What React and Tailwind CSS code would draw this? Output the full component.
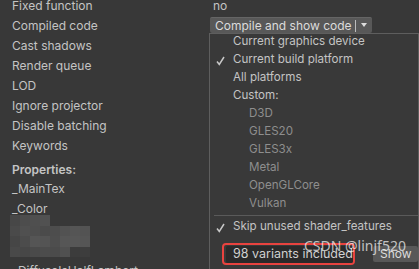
import React from "react";

const labels = [
  "Fixed function",
  "Compiled code",
  "Cast shadows",
  "Render queue",
  "LOD",
  "Ignore projector",
  "Disable batching",
  "Keywords",
];

const pix = [
  ["#474747", "#4d4d4d", "#4f4f4f", "#515151", "#383838", "#383838", "#383838", "#383838"],
  ["#4a4a4a", "#505050", "#4e4e4e", "#4b4b4b", "#4d4d4d", "#525252", "#555555", "#535353"],
  ["#464646", "#4c4c4c", "#555555", "#545454", "#4e4e4e", "#565656", "#575757", "#555555"],
  ["#494949", "#474747", "#4a4a4a", "#4c4c4c", "#4b4b4b", "#505050", "#3c3c3c", "#3d3d3d"],
];

function Check() {
  return (
    <svg width="9" height="10" viewBox="0 0 9 10" className="block">
      <path d="M1 5.5 L3.3 8.5 L8 1" fill="none" stroke="#c8c8c8" strokeWidth="1.5" />
    </svg>
  );
}

function Item({ children, checked, indent, dim }) {
  return (
    <div className="relative h-[18px] flex items-center whitespace-nowrap">
      {checked && (
        <span className="absolute left-[6px] top-[5px]">
          <Check />
        </span>
      )}
      <span
        className={
          (indent ? "pl-[39px] " : "pl-[23px] ") +
          (dim ? "text-[#8e8e8e]" : "text-[#c4c4c4]")
        }
      >
        {children}
      </span>
    </div>
  );
}

export default function App() {
  return (
    <div
      className="relative w-[419px] h-[269px] overflow-hidden bg-[#383838] text-[12px] text-[#c4c4c4] whitespace-nowrap"
      style={{ fontFamily: "Inter, 'Noto Sans', sans-serif" }}
    >
      <div className="flex -mt-[4px]">
        {/* left labels */}
        <div className="w-[210px] pl-[12px] flex flex-col">
          {labels.map((l) => (
            <div key={l} className="h-[20px] flex items-center">
              {l}
            </div>
          ))}
          <div className="h-[4px]" />
          <div className="h-[20px] flex items-center font-semibold">Properties:</div>
          <div className="h-[18px] flex items-center">_MainTex</div>
          <div className="h-[20px] flex items-center pt-[2px]">_Color</div>
          <div className="relative h-[43px]">
            <span className="absolute left-[60px] top-[26px] text-[#9a9a9a]">ha</span>
            <div className="absolute left-[-2px] top-[-3px] flex flex-col">
              {pix.map((row, i) => (
                <div key={i} className="flex">
                  {row.map((c, j) => (
                    <div key={j} className="w-[10px] h-[10.5px]" style={{ background: c }} />
                  ))}
                </div>
              ))}
            </div>
          </div>
          <div className="h-[20px] flex items-center">_DiffuseIsHalfLambert</div>
        </div>

        {/* right values */}
        <div className="flex flex-col">
          <div className="h-[20px] flex items-center pl-[3px]">no</div>
          <div className="mt-[1px] h-[16px] w-[162px] flex items-center rounded-[2px] bg-[#585858] text-[#dcdcdc] border-t border-[#656565]">
            <span className="pl-[5px] flex-1 text-[12px] leading-none">Compile and show code</span>
            <span className="w-px h-[12px] bg-[#bdbdbd]" />
            <span className="w-[16px] flex justify-center">
              <svg width="6" height="5" viewBox="0 0 6 5">
                <path d="M0 0 L6 0 L3 4 Z" fill="#dcdcdc" />
              </svg>
            </span>
          </div>
        </div>
      </div>

      {/* dropdown menu */}
      <div className="absolute left-[209px] top-[33px] w-[210px] h-[240px] bg-[#393939] border border-[#5e5e5e] text-[11.6px]">
        <div className="-mt-[1px]">
          <Item>Current graphics device</Item>
          <Item checked>Current build platform</Item>
          <Item>All platforms</Item>
          <Item>Custom:</Item>
          <Item indent dim>D3D</Item>
          <Item indent dim>GLES20</Item>
          <Item indent dim>GLES3x</Item>
          <Item indent dim>Metal</Item>
          <Item indent dim>OpenGLCore</Item>
          <Item indent dim>Vulkan</Item>
        </div>
        <div className="mt-[2px] ml-[4px] h-px bg-[#5a5a5a]" />
        <div className="mt-[2px]">
          <Item checked>Skip unused shader_features</Item>
        </div>
        <div className="mt-[7px] flex items-center">
          <div className="ml-[12px] w-[137px] h-[22px] rounded-[4px] border-2 border-[#e8433f] flex items-center">
            <div className="ml-[2px] w-[127px] h-[17px] bg-[#2a2a2a] rounded-[2px] flex items-center pl-[7px] text-[#d0d0d0] text-[12.5px]">
              98 variants included
            </div>
          </div>
          <div className="ml-[18px] w-[50px] h-[16px] rounded-[2px] bg-[#585858] flex items-center pl-[7px] text-[#dcdcdc] text-[12px]">
            Show
          </div>
        </div>
      </div>

      {/* watermark */}
      <div
        className="absolute left-[304px] top-[239px] text-[14px] text-white/70 leading-none"
        style={{ fontFamily: "'Noto Sans', sans-serif" }}
      >
        CSDN @linjf520
      </div>
    </div>
  );
}
